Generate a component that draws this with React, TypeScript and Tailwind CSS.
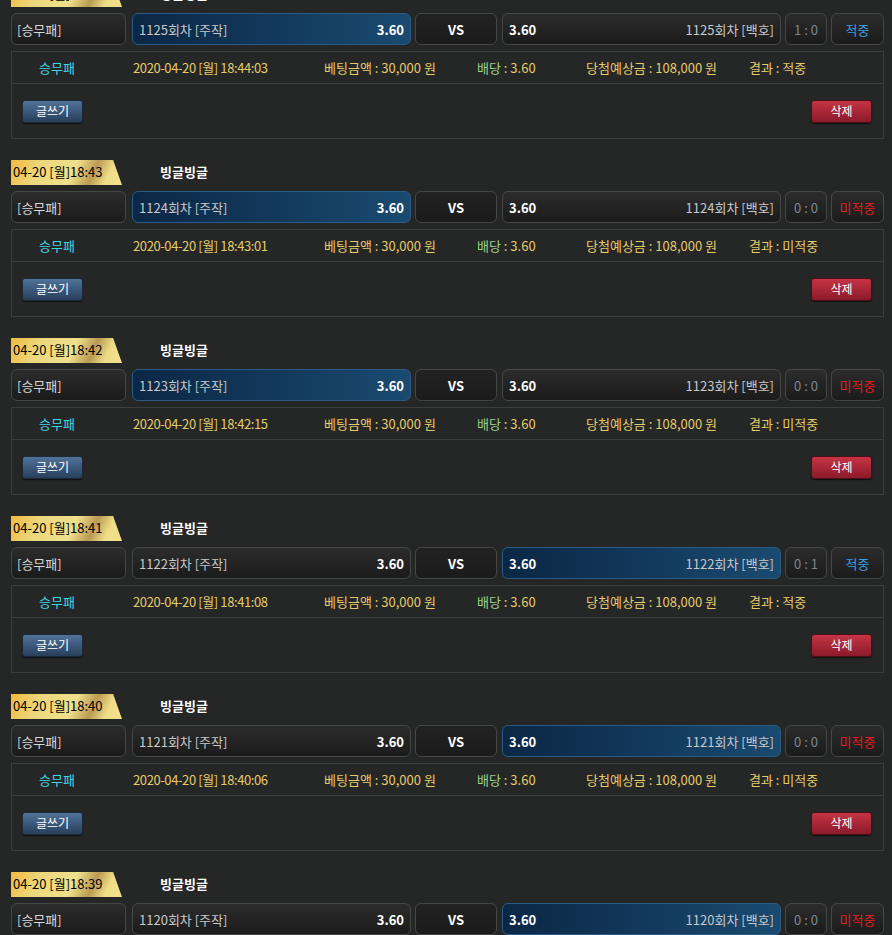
import React from "react";

type Bet = {
	time: string;
	round: string;
	side: "home" | "away";
	score: string;
	result: "적중" | "미적중";
	date: string;
};

const bets: Bet[] = [
	{ time: "04-20 [월]18:44", round: "1125", side: "home", score: "1 : 0", result: "적중", date: "2020-04-20 [월] 18:44:03" },
	{ time: "04-20 [월]18:43", round: "1124", side: "home", score: "0 : 0", result: "미적중", date: "2020-04-20 [월] 18:43:01" },
	{ time: "04-20 [월]18:42", round: "1123", side: "home", score: "0 : 0", result: "미적중", date: "2020-04-20 [월] 18:42:15" },
	{ time: "04-20 [월]18:41", round: "1122", side: "away", score: "0 : 1", result: "적중", date: "2020-04-20 [월] 18:41:08" },
	{ time: "04-20 [월]18:40", round: "1121", side: "away", score: "0 : 0", result: "미적중", date: "2020-04-20 [월] 18:40:06" },
	{ time: "04-20 [월]18:39", round: "1120", side: "away", score: "0 : 0", result: "미적중", date: "2020-04-20 [월] 18:39:02" },
];

const cell =
	"h-[32px] rounded-[6px] border border-[#464646] bg-gradient-to-b from-[#2c2c2c] to-[#1b1b1b] flex items-center";
const picked =
	"h-[32px] rounded-[6px] border border-[#2b5a86] bg-gradient-to-r from-[#0b2746] to-[#1a4a70] flex items-center";

function BetBlock({ bet }: { bet: Bet }) {
	const hit = bet.result === "적중";
	return (
		<div className="mb-[21px]">
			<div className="flex items-center h-[25px]">
				<div className="w-[111px] h-[25px] flex items-center pl-[2px] pb-[2px] text-[13px] text-black bg-[linear-gradient(115deg,#f2b93e_0%,#ecd77c_25%,#f0e08c_55%,#b99a52_72%,#efdc86_85%,#f3e28e_100%)] [clip-path:polygon(0_0,92%_0,100%_100%,0_100%)]">
					{bet.time}
				</div>
				<div className="ml-[38px] pb-[2px] text-[13px] font-bold text-white">빙글빙글</div>
			</div>

			<div className="flex mt-[6px] text-[13px]">
				<div className={`${cell} w-[115px] pl-[5px] text-[#d8d8d8]`}>[승무패]</div>
				<div className={`${bet.side === "home" ? picked : cell} w-[279px] ml-[6px] px-[6px] justify-between`}>
					<span className="text-[#c8c8c8]">{bet.round}회차 [주작]</span>
					<span className="font-bold text-white">3.60</span>
				</div>
				<div className={`${cell} w-[82px] ml-[4px] justify-center font-bold text-white bg-gradient-to-b from-[#222] to-[#0f0f0f]`}>
					VS
				</div>
				<div className={`${bet.side === "away" ? picked : cell} w-[279px] ml-[5px] px-[6px] justify-between`}>
					<span className="font-bold text-white">3.60</span>
					<span className="text-[#c8c8c8]">{bet.round}회차 [백호]</span>
				</div>
				<div className={`${cell} w-[42px] ml-[4px] justify-center text-[#7d8690]`}>{bet.score}</div>
				<div
					className={`${cell} w-[53px] ml-[4px] justify-center ${hit ? "text-[#3aa0e4]" : "text-[#e81c1c]"}`}
				>
					{bet.result}
				</div>
			</div>

			<div className="mt-[6px] border border-[#3d3d3d]">
				<div className="h-[32px] flex items-center border-b border-[#3d3d3d] text-[13px] text-[#e6cb6a]">
					<span className="w-[121px] pl-[27px] text-[#3fd6e6]">승무패</span>
					<span className="w-[191px] tracking-[-0.4px]">{bet.date}</span>
					<span className="w-[153px]">베팅금액 : 30,000 원</span>
					<span className="w-[109px]">
						<span className="text-[#9fd08a]">배당</span> : 3.60
					</span>
					<span className="w-[163px]">당첨예상금 : 108,000 원</span>
					<span>결과 : {bet.result}</span>
				</div>
				<div className="h-[54px] flex items-center justify-between px-[10px]">
					<button className="w-[61px] h-[23px] rounded-[3px] border border-[#1c2a3a] bg-gradient-to-b from-[#51739a] to-[#283f5c] text-[12px] text-white shadow-[0_1px_1px_rgba(0,0,0,0.6)]">
						글쓰기
					</button>
					<button className="w-[61px] h-[23px] mr-[1px] rounded-[3px] border border-[#4a0f18] bg-gradient-to-b from-[#c63444] to-[#8c1a2a] text-[12px] text-white shadow-[0_1px_1px_rgba(0,0,0,0.6)]">
						삭제
					</button>
				</div>
			</div>
		</div>
	);
}

export default function App() {
	return (
		<div className="min-h-[935px] h-[935px] overflow-hidden bg-[#252626] font-['Noto_Sans_CJK_KR','Noto_Sans',sans-serif] leading-none">
			<div className="w-[873px] ml-[11px] -mt-[18px]">
				{bets.map((b) => (
					<BetBlock key={b.round} bet={b} />
				))}
			</div>
		</div>
	);
}
